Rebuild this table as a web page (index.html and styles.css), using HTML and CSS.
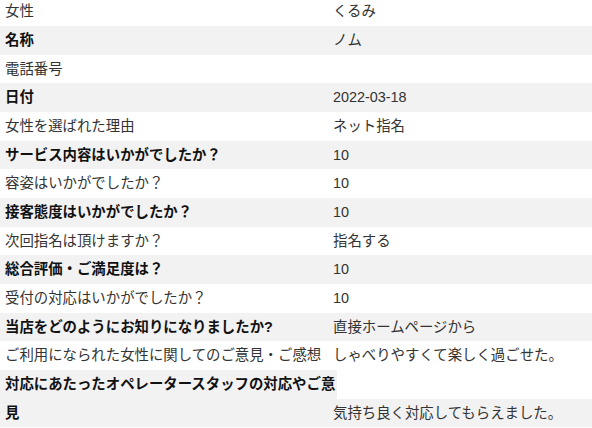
FILE: index.html
```html
<!DOCTYPE html>
<html lang="ja">
<head>
<meta charset="utf-8">
<link rel="stylesheet" href="styles.css">
</head>
<body>
<div class="list">
  <div class="row"><div class="lbl">女性</div><div class="val">くるみ</div></div>
  <div class="row"><div class="lbl">名称</div><div class="val">ノム</div></div>
  <div class="row"><div class="lbl">電話番号</div><div class="val"></div></div>
  <div class="row"><div class="lbl">日付</div><div class="val">2022-03-18</div></div>
  <div class="row"><div class="lbl">女性を選ばれた理由</div><div class="val">ネット指名</div></div>
  <div class="row"><div class="lbl">サービス内容はいかがでしたか？</div><div class="val">10</div></div>
  <div class="row"><div class="lbl">容姿はいかがでしたか？</div><div class="val">10</div></div>
  <div class="row"><div class="lbl">接客態度はいかがでしたか？</div><div class="val">10</div></div>
  <div class="row"><div class="lbl">次回指名は頂けますか？</div><div class="val">指名する</div></div>
  <div class="row"><div class="lbl">総合評価・ご満足度は？</div><div class="val">10</div></div>
  <div class="row"><div class="lbl">受付の対応はいかがでしたか？</div><div class="val">10</div></div>
  <div class="row"><div class="lbl">当店をどのようにお知りになりましたか?</div><div class="val">直接ホームページから</div></div>
  <div class="row"><div class="lbl">ご利用になられた女性に関してのご意見・ご感想</div><div class="val">しゃべりやすくて楽しく過ごせた。</div></div>
  <div class="row row-long"><div class="lbl">対応にあたったオペレータースタッフの対応やご意見</div><div class="val">気持ち良く対応してもらえました。</div></div>
</div>
</body>
</html>
```

FILE: styles.css
```css
html, body {
  margin: 0;
  padding: 0;
  background: #fff;
}

body {
  font-family: "Liberation Sans", "Noto Sans CJK JP", sans-serif;
  font-size: 14.4px;
  color: #333;
}

.list {
  margin-top: -2.67px;
}

.row {
  display: grid;
  grid-template-columns: 328px 1fr;
  height: 28.67px;
  line-height: 28.67px;
  background: #fff;
}

.row:nth-child(even) {
  background: #f2f2f2;
}

.row:nth-child(even) .lbl {
  font-weight: bold;
  color: #111;
}

.lbl {
  padding-left: 5px;
  white-space: nowrap;
}

.val {
  padding-left: 5px;
  white-space: nowrap;
}

.row.row-long {
  height: auto;
  grid-template-rows: 28.67px 28.67px;
  background: transparent;
}

.row-long .lbl {
  grid-column: 1 / 3;
  grid-row: 1 / 3;
  justify-self: start;
  white-space: normal;
  max-width: 337px;
  box-sizing: border-box;
  background: #f2f2f2;
}

.row-long .val {
  grid-column: 2;
  grid-row: 2;
  background: #f2f2f2;
}
```
